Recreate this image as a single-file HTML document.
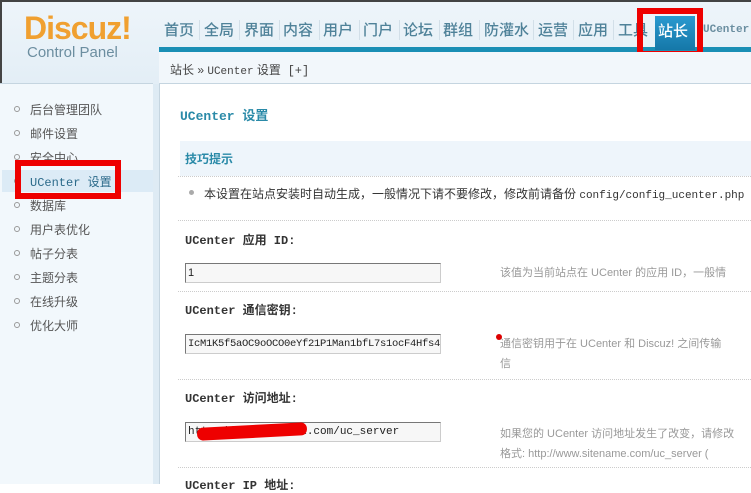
<!DOCTYPE html>
<html><head><meta charset="utf-8"><style>
*{margin:0;padding:0;box-sizing:border-box}
body{width:751px;height:484px;overflow:hidden;background:#fff;position:relative;font-family:"Liberation Sans","Noto Sans CJK SC",sans-serif;font-size:12px;color:#333}
.a{position:absolute}
.mono{font-family:"Liberation Mono","Noto Sans CJK SC",monospace}
.nav span{position:absolute;top:19px;font-size:15px;color:#4f8299;font-weight:500}
.sep{position:absolute;top:20px;width:1px;height:20px;background:#d2dfe8}
.side div{position:absolute;left:30px;font-size:12px;color:#555}
.side i{position:absolute;left:-16px;top:5px;width:6px;height:6px;border:1px solid #999;border-radius:50%}
.dot{position:absolute;left:178px;width:573px;border-top:1px dotted #ccc}
.lab{position:absolute;left:185px;font-weight:bold;font-size:12px;color:#333}
.inp{position:absolute;left:185px;width:256px;height:20px;border:1px solid #777;border-right-color:#ccc;border-bottom-color:#ccc;background:#f7f7f7;font-size:11px;padding:3px 2px;white-space:nowrap;overflow:hidden;color:#222}
.desc{position:absolute;left:500px;color:#999;font-size:11px;white-space:nowrap}
</style></head><body>
<div class="a" style="left:0;top:0;width:751px;height:84px;background:linear-gradient(#eef5fa,#e3eef6)"></div>
<div class="a" style="left:0;top:0;width:751px;height:2px;background:#444"></div>
<div class="a" style="left:0;top:0;width:2px;height:484px;background:#444"></div>
<div class="a" style="left:24px;top:10px;font-size:32px;font-weight:bold;color:#f0a030;letter-spacing:-1px">Discuz!</div>
<div class="a" style="left:27px;top:44px;font-size:15px;color:#6c8ea0">Control Panel</div>
<div class="nav">
<span style="left:164px">首页</span><div class="sep" style="left:199px"></div>
<span style="left:204px">全局</span><div class="sep" style="left:239px"></div>
<span style="left:244px">界面</span><div class="sep" style="left:279px"></div>
<span style="left:283px">内容</span><div class="sep" style="left:319px"></div>
<span style="left:323px">用户</span><div class="sep" style="left:359px"></div>
<span style="left:363px">门户</span><div class="sep" style="left:399px"></div>
<span style="left:403px">论坛</span><div class="sep" style="left:439px"></div>
<span style="left:443px">群组</span><div class="sep" style="left:479px"></div>
<span style="left:484px">防灌水</span><div class="sep" style="left:533px"></div>
<span style="left:538px">运营</span><div class="sep" style="left:573px"></div>
<span style="left:578px">应用</span><div class="sep" style="left:613px"></div>
<span style="left:618px">工具</span>
</div>
<div class="a" style="left:159px;top:47px;width:592px;height:5px;background:#1a8fb5"></div>
<div class="a" style="left:655px;top:16px;width:40px;height:34px;background:linear-gradient(#2a9ad0,#1578a8)"></div>
<div class="a" style="left:658px;top:20px;font-size:15px;color:#fff;font-weight:500">站长</div>
<div class="a" style="left:637px;top:8px;width:66px;height:49px;border:6px solid #e00"></div>
<div class="a mono" style="left:703px;top:24px;font-size:11px;color:#6a8ea0;font-weight:bold">UCenter</div>
<div class="a" style="left:159px;top:52px;width:592px;height:32px;background:#f2f7fb;border-bottom:1px solid #c5d5e0"></div>
<div class="a" style="left:170px;top:61px;font-size:12px;color:#444">站长 » <span class="mono" style="font-size:11px">UCenter</span> 设置 &nbsp;<span class="mono">[+]</span></div>
<div class="a" style="left:0;top:83px;width:153px;height:401px;background:#f2f8fc;border-top:1px solid #c5d5e0"></div>
<div class="a" style="left:153px;top:84px;width:6px;height:400px;background:#deebf4"></div>
<div class="a" style="left:159px;top:84px;width:1px;height:400px;background:#c5d5e0"></div>
<div class="a" style="left:2px;top:170px;width:151px;height:22px;background:#dcebf6"></div>
<div class="side">
<div style="top:101px"><i></i>后台管理团队</div>
<div style="top:125px"><i></i>邮件设置</div>
<div style="top:149px"><i></i>安全中心</div>
<div style="top:173px;color:#2b6a8a" class="mono"><i></i>UCenter 设置</div>
<div style="top:197px"><i></i>数据库</div>
<div style="top:221px"><i></i>用户表优化</div>
<div style="top:245px"><i></i>帖子分表</div>
<div style="top:269px"><i></i>主题分表</div>
<div style="top:293px"><i></i>在线升级</div>
<div style="top:317px"><i></i>优化大师</div>
</div>
<div class="a" style="left:15px;top:160px;width:106px;height:39px;border:6px solid #e00"></div>
<div class="a mono" style="left:180px;top:105px;font-size:13px;font-weight:bold;color:#2a8aa8">UCenter 设置</div>
<div class="a" style="left:180px;top:141px;width:571px;height:35px;background:#eef5fb"></div>
<div class="a" style="left:185px;top:150px;font-weight:bold;color:#2a8aa8;font-size:12px">技巧提示</div>
<div class="dot" style="top:176px"></div>
<div class="a" style="left:189px;top:190px;width:5px;height:5px;border-radius:50%;background:#aaa"></div>
<div class="a" style="left:204px;top:185px;font-size:12px;white-space:nowrap">本设置在站点安装时自动生成，一般情况下请不要修改，修改前请备份 <span class="mono" style="font-size:11px">config/config_ucenter.php 文</span></div>
<div class="dot" style="top:220px"></div>
<div class="lab mono" style="top:231px">UCenter 应用 ID:</div>
<div class="inp" style="top:263px">1</div>
<div class="desc" style="top:264px">该值为当前站点在 UCenter 的应用 ID，一般情</div>
<div class="dot" style="top:291px"></div>
<div class="lab mono" style="top:301px">UCenter 通信密钥:</div>
<div class="inp mono" style="top:334px;font-size:10.5px;letter-spacing:-0.3px">IcM1K5f5aOC9oOCO0eYf21P1Man1bfL7s1ocF4Hfs4</div>
<div class="desc" style="top:335px">通信密钥用于在 UCenter 和 Discuz! 之间传输</div>
<div class="desc" style="top:355px">信</div>
<div class="a" style="left:496px;top:334px;width:6px;height:6px;border-radius:50%;background:#d00"></div>
<div class="dot" style="top:379px"></div>
<div class="lab mono" style="top:389px">UCenter 访问地址:</div>
<div class="inp mono" style="top:422px">http://www.xxxxxxx.com/uc_server</div>
<div class="a" style="left:197px;top:425px;width:110px;height:13px;border-radius:6px;background:#e00;transform:rotate(-3deg)"></div>
<div class="desc" style="top:425px">如果您的 UCenter 访问地址发生了改变，请修改</div>
<div class="desc" style="top:445px">格式: http://www.sitename.com/uc_server (</div>
<div class="dot" style="top:467px"></div>
<div class="lab mono" style="top:476px">UCenter IP 地址:</div>
</body></html>
